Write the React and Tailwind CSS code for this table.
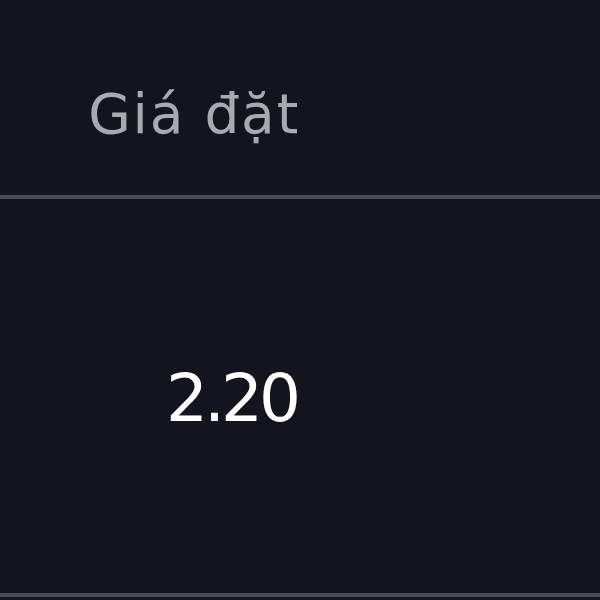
import React from "react";

export default function App() {
  return (
    <div className="w-[600px] h-[600px] bg-[#14141f] overflow-hidden" style={{ fontFamily: "'DejaVu Sans', 'Noto Sans', sans-serif" }}>
      {/* header */}
      <div className="h-[195px] flex items-center">
        <div className="w-[300px] text-right text-[55px] leading-none tracking-[1.8px] text-[#a9a9b1] pt-[34px]">
          Giá đặt
        </div>
      </div>
      <div className="h-[4px] bg-[#4b4b55]" />

      {/* row */}
      <div className="h-[394px] flex items-center">
        <div className="w-[297px] text-right text-[66px] leading-none tracking-[-4px] text-white pt-[6px]">
          2.20
        </div>
      </div>
      <div className="h-[4px] bg-[#4b4b55]" />
    </div>
  );
}
